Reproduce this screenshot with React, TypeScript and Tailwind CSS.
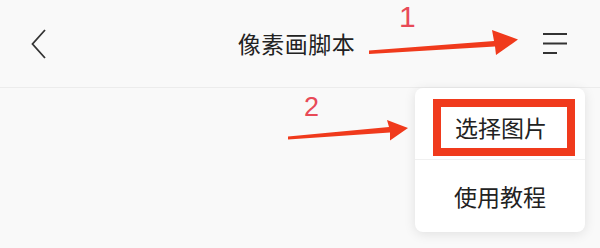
const cjk = { fontFamily: '"Noto Sans CJK SC", "Noto Sans", sans-serif' };

function BackIcon() {
  return (
    <svg width="16" height="30" viewBox="0 0 16 30" className="text-[#333]">
      <path d="M14 1 L1.5 15 L14 29" stroke="currentColor" strokeWidth="1.8" fill="none" strokeLinejoin="miter" />
    </svg>
  );
}

function MenuIcon() {
  return (
    <svg width="26" height="24" viewBox="0 0 26 24" className="text-[#333]">
      <path d="M1 2h24M1 11.5h24M1 21h14" stroke="currentColor" strokeWidth="2" fill="none" />
    </svg>
  );
}

function Annotations() {
  return (
    <svg className="absolute inset-0 pointer-events-none" width="600" height="248" viewBox="0 0 600 248">
      <polygon
        points="369,50.5 494,41 492,30 518,39.5 496,55 495,46.5 369,54"
        fill="#f03a1c"
      />
      <polygon
        points="288,136.5 389,127 387,120 408,128 390,140.5 390,132.5 288,139.5"
        fill="#f03a1c"
      />
    </svg>
  );
}

export default function App() {
  return (
    <div className="relative w-[600px] h-[248px] overflow-hidden bg-[#f9f9f9]" style={cjk}>
      <header className="h-[88px] flex items-center justify-between pl-[31px] pr-[32px] border-b border-[#ececec]">
        <BackIcon />
        <h1 className="text-[23px] text-[#222] tracking-[0.5px] pl-[4px]">像素画脚本</h1>
        <MenuIcon />
      </header>

      <Annotations />
      <span className="absolute left-[399px] top-[2px] text-[30px] leading-none font-light text-[#e84a57]" style={{ fontFamily: '"Liberation Sans", sans-serif' }}>
        1
      </span>
      <span className="absolute left-[304px] top-[94px] text-[27px] leading-none font-light text-[#e84a57]" style={{ fontFamily: '"Liberation Sans", sans-serif' }}>
        2
      </span>

      <div className="absolute left-[415px] top-[88px] w-[170px] bg-white rounded-[8px] shadow-[0_2px_12px_rgba(0,0,0,0.10)] flex flex-col">
        <div className="h-[72px] pl-[18px] pr-[10px] pt-[11px] pb-[3px] border-b border-[#f0f0f0]">
          <div className="h-full border-[8px] border-[#f03a1c] flex items-center justify-center text-[23px] text-[#222] pr-[6px]">
            选择图片
          </div>
        </div>
        <div className="h-[72px] flex items-center justify-center text-[23px] text-[#222]">使用教程</div>
      </div>
    </div>
  );
}
